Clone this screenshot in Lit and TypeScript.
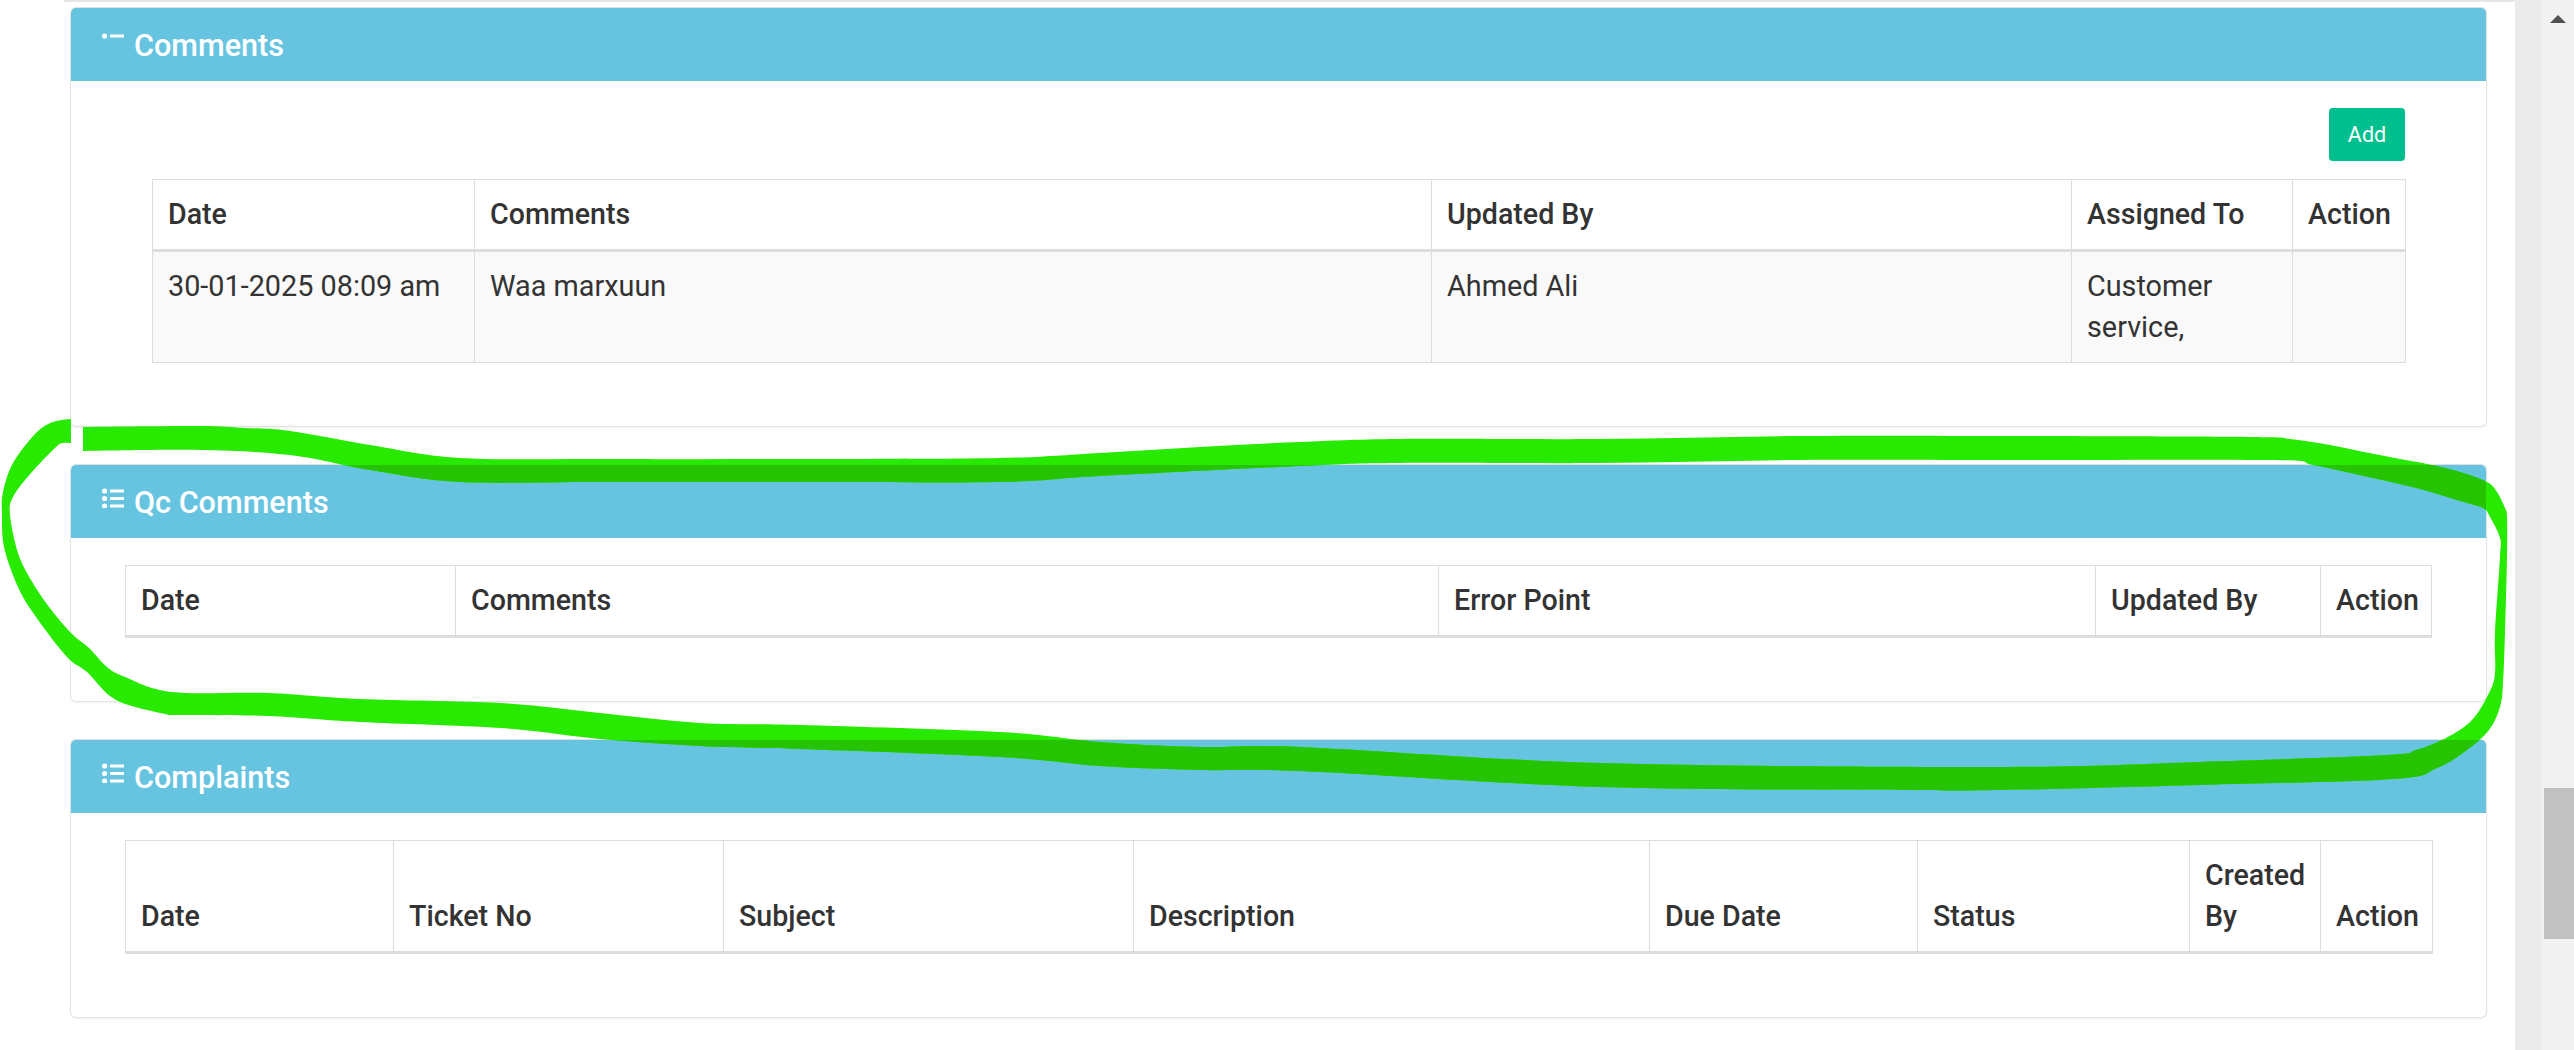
import { LitElement, html, css, svg } from "lit";
import { customElement } from "lit/decorators.js";

type Pt = [number, number];

const OUTER: Pt[] = [[83,427],[200,426],[245,428],[290,431],[370,445],[460,458],[600,459],[800,459],[1000,458],[1100,453],[1200,447],[1300,442],[1400,439],[1600,439],[1800,436],[2000,436],[2250,437],[2290,439],[2330,445],[2364,452],[2395,458],[2427,464],[2460,472],[2487,482],[2497,492],[2505,508],[2507,517],[2507,557],[2505,633],[2503,683],[2500,707],[2489,730],[2467,750],[2437,768],[2394,779],[2200,785],[2000,790],[1900,790],[1600,787],[1300,771],[1200,770],[1100,766],[1000,757],[800,749],[700,746],[600,739],[500,728],[360,722],[268,716],[178,715],[165,714],[116,700],[87,672],[67,657],[36,617],[18,587],[4,547],[2,513],[3,492],[13,463],[36,433],[53,422],[71,419]];
const INNER: Pt[] = [[71,443],[63,443],[56,447],[31,473],[13,497],[10,515],[18,553],[31,580],[49,607],[71,633],[89,648],[107,667],[125,677],[172,692],[268,693],[360,699],[500,703],[600,713],[700,723],[800,725],[1000,732],[1100,742],[1200,747],[1300,747],[1600,763],[2000,767],[2200,762],[2386,755],[2416,750],[2446,738],[2472,720],[2489,693],[2495,673],[2495,633],[2500,557],[2500,538],[2490,517],[2483,508],[2460,501],[2420,489],[2373,478],[2313,465],[2270,460],[2000,460],[1800,460],[1600,463],[1400,463],[1300,466],[1100,476],[1000,482],[800,482],[600,482],[460,482],[370,470],[290,455],[200,450],[83,451]];

function smooth(p: Pt[]): string {
  let d = "";
  for (let i = 0; i < p.length - 1; i++) {
    const a = p[Math.max(i - 1, 0)], b = p[i], c = p[i + 1], e = p[Math.min(i + 2, p.length - 1)];
    const c1x = b[0] + (c[0] - a[0]) / 6, c1y = b[1] + (c[1] - a[1]) / 6;
    const c2x = c[0] - (e[0] - b[0]) / 6, c2y = c[1] - (e[1] - b[1]) / 6;
    d += ` C${c1x.toFixed(1)} ${c1y.toFixed(1)} ${c2x.toFixed(1)} ${c2y.toFixed(1)} ${c[0]} ${c[1]}`;
  }
  return d;
}
const STROKE = `M${OUTER[0][0]} ${OUTER[0][1]}${smooth(OUTER)} L${INNER[0][0]} ${INNER[0][1]}${smooth(INNER)} Z`;

interface Col { label: string; width: number; }
const COMMENTS: Col[] = [
  { label: "Date", width: 322 }, { label: "Comments", width: 957 }, { label: "Updated By", width: 640 },
  { label: "Assigned To", width: 221 }, { label: "Action", width: 113 },
];
const QC: Col[] = [
  { label: "Date", width: 330 }, { label: "Comments", width: 983 }, { label: "Error Point", width: 657 },
  { label: "Updated By", width: 225 }, { label: "Action", width: 111 },
];
const COMPLAINTS: Col[] = [
  { label: "Date", width: 268 }, { label: "Ticket No", width: 330 }, { label: "Subject", width: 410 },
  { label: "Description", width: 516 }, { label: "Due Date", width: 268 }, { label: "Status", width: 272 },
  { label: "Created By", width: 131 }, { label: "Action", width: 112 },
];

@customElement("app-root")
export class AppRoot extends LitElement {
  static styles = css`
    :host { display: flex; width: 2574px; height: 1050px; overflow: hidden; position: relative; background: #fff;
      font-family: Roboto, "Liberation Sans", sans-serif; color: #333; }
    .main { width: 2515px; flex: none; }
    .topline { height: 2px; margin-left: 64px; background: #e6e6e6; }
    .panel { box-sizing: border-box; width: 2417px; margin: 5px 0 37px 70px; border: 1px solid #e3e3e3; border-top-color: #e0e0e0;
      border-radius: 6px; background: #fff; box-shadow: 0 1px 2px rgba(0,0,0,.05); overflow: hidden; }
    .panel + .panel { margin-top: 0; }
    .head { display: flex; align-items: flex-start; height: 73px; box-sizing: border-box; padding: 17px 0 0 31px; background: #67c4e0; color: #fff; }
    .head svg { width: 22px; height: 20px; margin: 6px 10px 0 0; flex: none; }
    .head svg.one { margin-top: 8px; }
    .title { font-size: 30.6px; font-weight: 500; line-height: 41px; }
    .body { padding: 27px 81px 63px 54px; }
    .body.inset { padding-left: 81px; }
    .tools { display: flex; justify-content: flex-end; margin-bottom: 18px; }
    .btn { box-sizing: border-box; width: 76px; height: 53px; border: 0; border-radius: 4px; padding: 0; background: #00bf8e; color: #fff;
      font: 400 21.5px Roboto, sans-serif; }
    table { border-collapse: collapse; table-layout: fixed; font-size: 28.6px; line-height: 41px; }
    th, td { box-sizing: border-box; padding: 14px 15px; border: 1px solid #ddd; text-align: left; vertical-align: top; }
    th { font-weight: 500; vertical-align: bottom; border-bottom: 3px solid #ddd; }
    td { font-weight: 400; font-size: 28.8px; background: #f9f9f9; }
    .bar { width: 59px; flex: none; display: flex; background: #ebebeb; }
    .bar .gutter { width: 27px; flex: none; }
    .track { flex: 1; background: #f1f1f1; display: flex; flex-direction: column; align-items: center; padding-top: 15px; }
    .arrow { width: 0; height: 0; border-left: 8px solid transparent; border-right: 8px solid transparent; border-bottom: 8px solid #505050; }
    .thumb { align-self: flex-end; width: 30px; height: 151px; margin-top: 765px; background: #c1c1c1; }
    .ink { position: absolute; left: 0; top: 0; width: 2574px; height: 1050px; pointer-events: none; }
  `;

  private icon(rows: number) {
    const ys = [3, 10.5, 18].slice(0, rows);
    return html`<svg class=${rows === 1 ? "one" : ""} viewBox="0 0 22 20" fill="#fff">
      ${ys.map((y) => svg`<circle cx="2.6" cy=${y} r="2.6"></circle><rect x="8" y=${y - 1.5} width="14" height="3"></rect>`)}
    </svg>`;
  }

  private table(cols: Col[], rows: string[][] = []) {
    const width = cols.reduce((s, c) => s + c.width, 0);
    return html`<table style="width:${width}px">
      <colgroup>${cols.map((c) => html`<col style="width:${c.width}px" />`)}</colgroup>
      <thead><tr>${cols.map((c) => html`<th>${c.label}</th>`)}</tr></thead>
      <tbody>${rows.map((r) => html`<tr>${r.map((v) => html`<td>${v}</td>`)}</tr>`)}</tbody>
    </table>`;
  }

  render() {
    return html`
      <div class="main">
        <div class="topline"></div>
        <section class="panel">
          <div class="head">${this.icon(1)}<span class="title">Comments</span></div>
          <div class="body inset">
            <div class="tools"><button class="btn">Add</button></div>
            ${this.table(COMMENTS, [["30-01-2025 08:09 am", "Waa marxuun", "Ahmed Ali", "Customer service,", ""]])}
          </div>
        </section>
        <section class="panel">
          <div class="head">${this.icon(3)}<span class="title">Qc Comments</span></div>
          <div class="body">${this.table(QC)}</div>
        </section>
        <section class="panel">
          <div class="head">${this.icon(3)}<span class="title">Complaints</span></div>
          <div class="body">${this.table(COMPLAINTS)}</div>
        </section>
      </div>
      <div class="bar">
        <div class="gutter"></div>
        <div class="track"><div class="arrow"></div><div class="thumb"></div></div>
      </div>
      <svg class="ink" viewBox="0 0 2574 1050">
        <defs><clipPath id="over"><rect x="71" y="465" width="2415" height="73"></rect><rect x="71" y="740" width="2415" height="73"></rect></clipPath></defs>
        <path d=${STROKE} fill="#28e900"></path>
        <path d=${STROKE} fill="#26c400" clip-path="url(#over)"></path>
      </svg>
    `;
  }
}
